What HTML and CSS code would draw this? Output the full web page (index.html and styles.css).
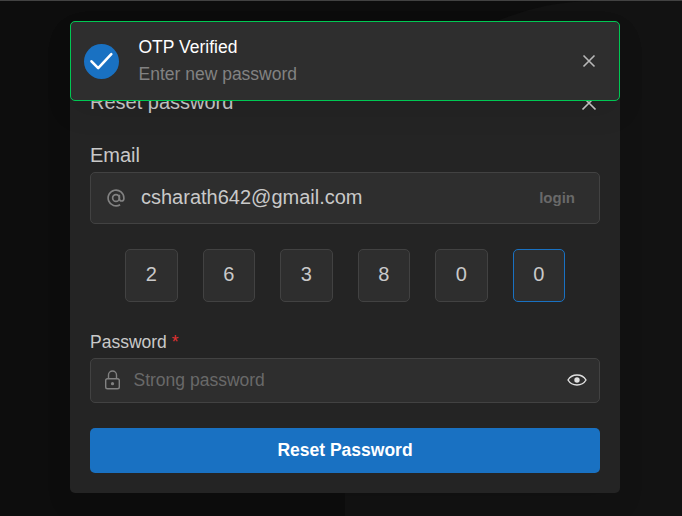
FILE: index.html
```html
<!DOCTYPE html>
<html lang="en">
<head>
<meta charset="utf-8">
<title>Reset password</title>
<link rel="stylesheet" href="styles.css">
</head>
<body>
<div class="page">
  <div class="backdrop-shape"></div>
  <section class="modal">
    <header class="modal-header">
      <h2 class="modal-title">Reset password</h2>
      <svg class="modal-close" viewBox="0 0 16 16"><path d="M1.5 1.5l13 13M14.5 1.5l-13 13"/></svg>
    </header>
    <label class="label label-lg">Email</label>
    <div class="field field-lg">
      <svg class="icon-at" viewBox="0 0 24 24"><circle cx="12" cy="12" r="4.500"/><path d="M16.500 7.500V13a3 3 0 0 0 6 0v-1a10.500 10.500 0 1 0-5 9"/></svg>
      <span class="email">csharath642@gmail.com</span>
      <span class="login">login</span>
    </div>
    <div class="pins">
      <div class="pin">2</div>
      <div class="pin">6</div>
      <div class="pin">3</div>
      <div class="pin">8</div>
      <div class="pin">0</div>
      <div class="pin pin-active">0</div>
    </div>
    <label class="label">Password <span class="required">*</span></label>
    <div class="field">
      <svg class="icon-lock" viewBox="0 0 18 20"><rect x="1.700" y="8.700" width="13.600" height="10" rx="1.800"/><path d="M4.500 8.700V5a4 4 0 0 1 8 0v3.700"/><circle class="dot" cx="8.500" cy="13.700" r="1.600"/></svg>
      <span class="placeholder">Strong password</span>
      <svg class="icon-eye" viewBox="0 0 20 12"><path d="M1 6C3 2.6 6.2 1 10 1s7 1.600 9 5c-2 3.400-5.200 5-9 5S3 9.400 1 6z"/><circle cx="10" cy="6" r="2.700"/></svg>
    </div>
    <button class="submit">Reset Password</button>
  </section>
  <aside class="toast">
    <div class="toast-icon"><svg viewBox="0 0 35 35"><path d="M7.500 17.300l6.700 6.800L27.300 10.200"/></svg></div>
    <div class="toast-body">
      <div class="toast-title">OTP Verified</div>
      <div class="toast-text">Enter new password</div>
    </div>
    <svg class="toast-close" viewBox="0 0 14 14"><path d="M1.500 1.500l11 11M12.500 1.500l-11 11"/></svg>
  </aside>
</div>
</body>
</html>
```
FILE: styles.css
```css
* { box-sizing: border-box; }
body {
  margin: 0;
  background: #0d0d0d;
  color: #c9c9c9;
  font: 17.5px/27px "Liberation Sans", Arial, sans-serif;
}
svg { display: block; flex: none; fill: none; stroke: currentColor; }
.page {
  position: relative;
  height: 516px;
  padding: 20px 62px 0 70px;
  border-top: 1px solid #424242;
  overflow: hidden;
}
.backdrop-shape {
  position: absolute;
  left: 345px;
  top: 0;
  width: 500px;
  height: 700px;
  background: #121212;
  border-radius: 250px 0 0 0;
}
.modal {
  position: relative;
  height: 472px;
  padding: 66px 20px 20px;
  border-radius: 5px;
  background: #242424;
  box-shadow: 0 12px 28px rgba(0, 0, 0, .08);
}
.modal-header {
  display: flex;
  align-items: center;
  justify-content: space-between;
  height: 30px;
}
.modal-title { margin: 0; font-size: 20px; font-weight: 400; line-height: 30px; }
.modal-close { width: 16px; height: 16px; margin: 2px 3px 0 0; stroke-width: 1.7; }
.label { display: block; margin-top: 27px; line-height: 27px; }
.label-lg { margin-top: 22px; font-size: 20px; line-height: 32px; }
.field {
  display: flex;
  align-items: center;
  height: 45px;
  margin-top: 2px;
  padding: 0 12px 0 13px;
  border: 1px solid #424242;
  border-radius: 5px;
  background: #2e2e2e;
}
.field-lg { height: 52px; margin-top: 1px; padding: 0 24px 0 16px; }
.icon-at { width: 18px; height: 18px; color: #828282; stroke-width: 2.2; }
.email { flex: 1; margin-left: 16px; padding-bottom: 2px; font-size: 20px; }
.login { padding-bottom: 2px; color: #696969; font-size: 15px; font-weight: 700; }
.pins { display: flex; justify-content: center; gap: 25px; margin-top: 25px; }
.pin {
  width: 52.5px;
  height: 53px;
  border: 1px solid #424242;
  border-radius: 5px;
  background: #2e2e2e;
  font-size: 20px;
  line-height: 48px;
  text-align: center;
}
.pin-active { border-color: #1971c2; }
.required { color: #e03131; }
.icon-lock { width: 18px; height: 20px; margin-bottom: 1px; color: #828282; stroke-width: 1.4; }
.icon-lock .dot { fill: currentColor; stroke: none; }
.placeholder { flex: 1; margin-left: 11.5px; color: #696969; }
.icon-eye { width: 20px; height: 12px; margin-bottom: 1px; stroke-width: 1.4; color: #e0e0e0; }
.icon-eye circle { fill: currentColor; stroke: none; }
.submit {
  display: block;
  width: 100%;
  height: 45px;
  margin: 25px 0 0;
  padding: 0;
  border: 0;
  border-radius: 5px;
  background: #1971c2;
  color: #fff;
  font: 700 17.5px/45px "Liberation Sans", Arial, sans-serif;
}
.toast {
  position: absolute;
  top: 20px;
  left: 70px;
  display: flex;
  align-items: center;
  width: 550px;
  height: 80px;
  padding: 0 23px 0 13px;
  border: 1px solid #00c853;
  border-radius: 5px;
  background: #2e2e2e;
  box-shadow: 0 12px 28px rgba(0, 0, 0, .08);
}
.toast-icon { width: 35px; height: 35px; border-radius: 50%; background: #1971c2; color: #fff; }
.toast-icon svg { stroke-width: 2.6; stroke-linecap: round; stroke-linejoin: round; }
.toast-body { flex: 1; margin-left: 19.5px; }
.toast-title { color: #fff; }
.toast-text { color: #828282; }
.toast-close { width: 14px; height: 14px; color: #b8b8b8; stroke-width: 1.6; }
```
